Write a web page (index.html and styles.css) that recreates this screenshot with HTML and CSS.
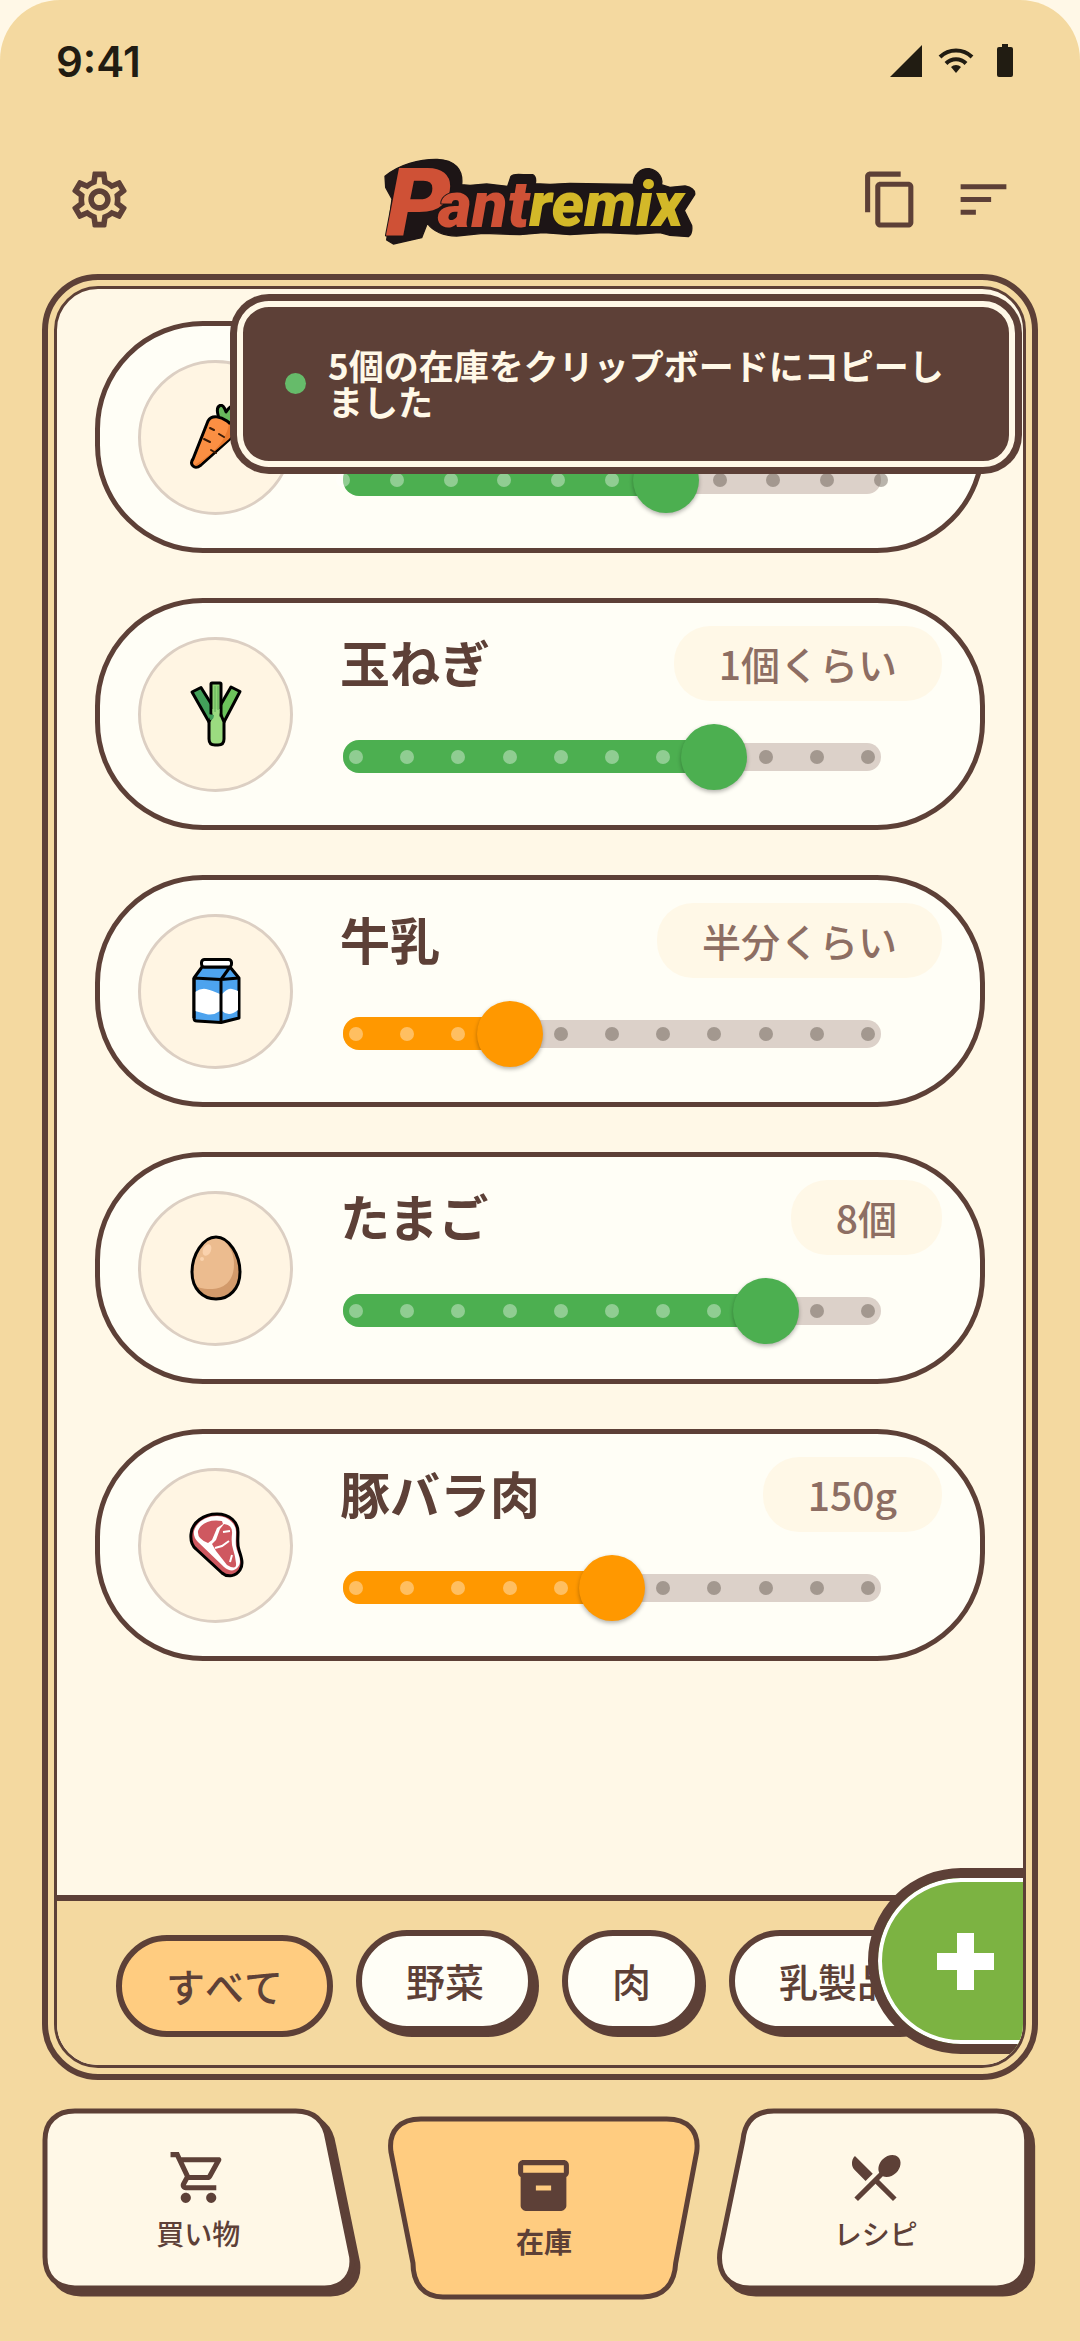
FILE: index.html
```
<!DOCTYPE html>

<html lang="ja">
<head>
<meta charset="utf-8"/>
<meta content="width=device-width, initial-scale=1.0" name="viewport"/>
<title>Pantremix - 在庫</title>
<link rel="stylesheet" href="styles.css">
</head>
<body>
<div class="app">
<!-- Barra de estado -->
<div class="status-bar">
<span class="hora">9:41</span>
<svg class="status-icons" viewBox="0 0 124 34" aria-hidden="true">
<path d="M0 33 32 1v32z"/>
<path d="M66 29l-5-6a7 7 0 0 1 10 0z"/>
<path class="wave" d="M50 13a23 23 0 0 1 32 0M56 19.5a14 14 0 0 1 20 0"/>
<path d="M112 0h6v3h3q2 0 2 2v26q0 2-2 2h-12q-2 0-2-2V5q0-2 2-2h3z"/>
</svg>
</div>

<!-- Cabecera -->
<header class="header">
<button class="icon-btn ajustes" type="button" aria-label="設定">
<svg viewBox="0 0 24 24"><path d="M19.43 12.98c.04-.32.07-.64.07-.98s-.03-.66-.07-.98l2.11-1.65c.19-.15.24-.42.12-.64l-2-3.46c-.09-.16-.26-.25-.44-.25-.06 0-.12.01-.17.03l-2.49 1c-.52-.4-1.08-.73-1.69-.98l-.38-2.65C14.46 2.18 14.25 2 14 2h-4c-.25 0-.46.18-.49.42l-.38 2.65c-.61.25-1.17.59-1.69.98l-2.49-1c-.06-.02-.12-.03-.18-.03-.17 0-.34.09-.43.25l-2 3.46c-.13.22-.07.49.12.64l2.11 1.65c-.04.32-.07.65-.07.98s.03.66.07.98l-2.11 1.65c-.19.15-.24.42-.12.64l2 3.46c.09.16.26.25.44.25.06 0 .12-.01.17-.03l2.49-1c.52.4 1.08.73 1.69.98l.38 2.65c.03.24.24.42.49.42h4c.25 0 .46-.18.49-.42l.38-2.65c.61-.25 1.17-.59 1.69-.98l2.49 1c.06.02.12.03.18.03.17 0 .34-.09.43-.25l2-3.46c.12-.22.07-.49-.12-.64l-2.11-1.65zm-1.98-1.71c.04.31.05.52.05.73 0 .21-.02.43-.05.73l-.14 1.13.89.7 1.08.84-.7 1.21-1.27-.51-1.04-.42-.9.68c-.43.32-.84.56-1.25.73l-1.06.43-.16 1.13-.2 1.35h-1.4l-.19-1.35-.16-1.13-1.06-.43c-.43-.18-.83-.41-1.23-.71l-.91-.7-1.06.43-1.27.51-.7-1.21 1.08-.84.89-.7-.14-1.13c-.03-.31-.05-.54-.05-.74s.02-.43.05-.73l.14-1.13-.89-.7-1.08-.84.7-1.21 1.27.51 1.04.42.9-.68c.43-.32.84-.56 1.25-.73l1.06-.43.16-1.13.2-1.35h1.39l.19 1.35.16 1.13 1.06.43c.43.18.83.41 1.23.71l.91.7 1.06-.43 1.27-.51.7 1.21-1.07.85-.89.7.14 1.13zM12 8c-2.21 0-4 1.79-4 4s1.79 4 4 4 4-1.79 4-4-1.79-4-4-4zm0 6c-1.1 0-2-.9-2-2s.9-2 2-2 2 .9 2 2-.9 2-2 2z"/></svg>
</button>
<svg class="logo" viewBox="0 0 1020 330" role="img" aria-label="Pantremix">
<path class="logo-base" d="M45 97C85 62 150 45 202 46C254 48 280 76 275 122L300 124L350 120L413 127L423 97Q430 89 460 92L488 92Q500 98 496 119L540 121L600 118L700 120L790 121C790 92 812 72 838 74C868 80 880 105 874 122L900 130L945 126Q977 133 974 152L943 200L965 245Q968 270 955 278L900 274L870 266L800 270L700 266L600 272L520 266L450 272L340 268L260 276Q200 275 172 238L155 281L70 300L50 288L66 165L47 130Z"/>
<text class="logo-p" x="42" y="272">P</text>
<text class="logo-ant" x="204" y="248">ant</text>
<text class="logo-remix" x="478" y="246">remix</text>
</svg>
<div class="acciones">
<button class="icon-btn" type="button" aria-label="コピー">
<svg viewBox="0 0 24 24"><path d="M16 1H4c-1.1 0-2 .9-2 2v14h2V3h12V1zm3 4H8c-1.1 0-2 .9-2 2v14c0 1.1.9 2 2 2h11c1.1 0 2-.9 2-2V7c0-1.1-.9-2-2-2zm0 16H8V7h11v14z"/></svg>
</button>
<button class="icon-btn" type="button" aria-label="並べ替え">
<svg viewBox="0 0 24 24"><path d="M3 18h6v-2H3v2zM3 6v2h18V6H3zm0 7h12v-2H3v2z"/></svg>
</button>
</div>
</header>

<!-- Despensa -->
<main class="marco">
<div class="panel">
<ul class="lista">
<li class="card">
<div class="foto">
<svg viewBox="0 0 64 66">
<path class="trazo" fill="#69b95c" d="M36 17C33 9 32 3 36 1.500S42 8 42 8s5-8 8-6 0 8 0 8 8-3 8 1-10 10-10 10z"/>
<path class="trazo" fill="#fb8f43" d="M24 17C28 10 37 13 43 17S51 29 47 34L17 61Q12 65 9 62T9 55Z"/>
<path fill="#e97a2f" d="M45 20c6 6 3 12 0 15L17 59q-4 4-6 2c14-9 30-20 34-41z"/>
<path class="raya" d="M26 24l4 2M35 30l5 3M20 35l6 3M27 46l5 3"/>
</svg>
</div>
<div class="info">
<div class="titulo"></div>
<div class="slider borde" style="--nivel: 6">
<span class="pista"></span>
<span class="relleno"></span>
<span class="puntos"><i class="on"></i><i class="on"></i><i class="on"></i><i class="on"></i><i class="on"></i><i class="on"></i><i></i><i></i><i></i><i></i><i></i></span>
<input id="nivel-1" type="range" min="0" max="10" value="6" aria-label="にんじん"/>
</div>
</div>
</li>

<li class="card">
<div class="foto">
<svg viewBox="0 0 64 66">
<path class="trazo" fill="#43a05a" d="M8 11 17 6.500 36 37 25 41Z"/>
<path class="trazo" fill="#6cc35b" d="M47 6 56 10.500 40 41 29 37Z"/>
<path class="trazo" fill="#8fd474" d="M27 3q0-1 1-1h8q1 0 1 1v34h-10z"/>
<path class="trazo" fill="#9bdb80" d="M25 41 28 34h9L40 41V58q0 6-6 6h-3q-6 0-6-6z"/>
<path fill="#9bdb80" d="M28.500 28h7v12h-7z"/>
<path stroke="#5cae58" fill="none" d="M31 5v26M34 5v24"/>
<path fill="#43a05a" d="M24 33l6 1q0 5-4 5z"/>
</svg>
</div>
<div class="info">
<div class="titulo">
<label for="nivel-2">玉ねぎ</label>
<span class="cantidad">1個くらい</span>
</div>
<div class="slider" style="--nivel: 7">
<span class="pista"></span>
<span class="relleno"></span>
<span class="puntos"><i class="on"></i><i class="on"></i><i class="on"></i><i class="on"></i><i class="on"></i><i class="on"></i><i class="on"></i><i></i><i></i><i></i><i></i></span>
<input id="nivel-2" type="range" min="0" max="10" value="7"/>
</div>
</div>
</li>

<li class="card">
<div class="foto">
<svg viewBox="0 0 64 66">
<path class="trazo" fill="#4da3ee" d="M10 20 18 9H46L55 20V60L37 64.500 13 63Q10 63 10 60Z"/>
<path fill="#fff" d="M11 34q6-4 11-3t14 5v17q-7 5-14 3t-11-3zM38 36q6-6 10-5t6 2v19q-5 4-9 4t-7-3z"/>
<path class="trazo" fill="none" d="M10 20 37 21.500 55 20M37 21.500V64.500M37 21.500 46 9M10 20V60"/>
<rect class="trazo" fill="#fff" x="17.500" y="1.500" width="30" height="7.500" rx="3"/>
</svg>
</div>
<div class="info">
<div class="titulo">
<label for="nivel-3">牛乳</label>
<span class="cantidad">半分くらい</span>
</div>
<div class="slider medio" style="--nivel: 3">
<span class="pista"></span>
<span class="relleno"></span>
<span class="puntos"><i class="on"></i><i class="on"></i><i class="on"></i><i></i><i></i><i></i><i></i><i></i><i></i><i></i><i></i></span>
<input id="nivel-3" type="range" min="0" max="10" value="3"/>
</div>
</div>
</li>

<li class="card">
<div class="foto">
<svg viewBox="0 0 64 66">
<path fill="#d29a6b" d="M32 2C45 2 56 20 56 37S45 64 32 64 8 54 8 37 19 2 32 2Z"/>
<path fill="#ecbc8f" d="M32 2C43 4 50 17 50 29 50 48 38 54 27 54 18 54 12 53 9 47 4 25 19 2 32 2Z"/>
<ellipse fill="#fad2ad" cx="23" cy="15" rx="4" ry="6" transform="rotate(25 23 15)"/>
<circle fill="#fad2ad" cx="18" cy="24" r="2"/>
<path class="trazo" fill="none" d="M32 2C45 2 56 20 56 37S45 64 32 64 8 54 8 37 19 2 32 2Z"/>
</svg>
</div>
<div class="info">
<div class="titulo">
<label for="nivel-4">たまご</label>
<span class="cantidad">8個</span>
</div>
<div class="slider" style="--nivel: 8">
<span class="pista"></span>
<span class="relleno"></span>
<span class="puntos"><i class="on"></i><i class="on"></i><i class="on"></i><i class="on"></i><i class="on"></i><i class="on"></i><i class="on"></i><i class="on"></i><i></i><i></i><i></i></span>
<input id="nivel-4" type="range" min="0" max="10" value="8"/>
</div>
</div>
</li>

<li class="card">
<div class="foto">
<svg viewBox="0 0 64 66">
<path class="trazo" fill="#cf5860" d="M7 22C8 10 20 2 33 2S54 10 54 20 53 32 55 38 60 52 56 58 44 66 38 61L12 37Q6 32 7 22Z"/>
<path fill="#fff" d="M10 19C13 9 23 4 33 4S52 11 52 20 51 32 53 38 58 50 54 55 45 59 40 55L14 30Q9 25 10 19Z"/>
<path fill="#cf5860" d="M14 19C17 11 26 7 38 9L39 12 33 16 28 28 24 31Q13 27 14 19ZM40 12Q49 13 48 22T49 37 52 51 43 53L32 39 28 32 32 28 36 17Z"/>
<path stroke="#fff" stroke-width="2" fill="none" d="M39 20l7-1M31 36l7-2 7-5M46 50l2-7"/>
</svg>
</div>
<div class="info">
<div class="titulo">
<label for="nivel-5">豚バラ肉</label>
<span class="cantidad">150g</span>
</div>
<div class="slider medio" style="--nivel: 5">
<span class="pista"></span>
<span class="relleno"></span>
<span class="puntos"><i class="on"></i><i class="on"></i><i class="on"></i><i class="on"></i><i class="on"></i><i></i><i></i><i></i><i></i><i></i><i></i></span>
<input id="nivel-5" type="range" min="0" max="10" value="5"/>
</div>
</div>
</li>
</ul>

<div class="filtros">
<button class="chip activo" type="button">すべて</button>
<button class="chip" type="button">野菜</button>
<button class="chip" type="button">肉</button>
<button class="chip" type="button">乳製品</button>
</div>

<button class="fab" type="button" aria-label="追加">
<svg viewBox="0 0 57 57"><path d="M20 0h17v20h20v17H37v20H20V37H0V20h20z"/></svg>
</button>

<div class="toast" role="status">
<span class="toast-punto"></span>
<p>5個の在庫をクリップボードにコピーしました</p>
</div>
</div>
</main>

<!-- Navegación -->
<nav class="nav">
<a class="nav-item compras" href="#kaimono">
<svg class="forma" viewBox="0 0 321 192">
<path class="sombra" d="M39 9H260C278 9 289 18 292 38L316 155C318 172 308 186 289 186H39C20 186 9 174 9 155V38C9 20 20 9 39 9Z"/>
<path d="M33 3H254C272 3 283 12 286 32L310 149C312 166 302 180 283 180H33C14 180 3 168 3 149V32C3 14 14 3 33 3Z"/>
</svg>
<svg class="nav-icon" viewBox="0 0 24 24"><path d="M15.55 13c.75 0 1.41-.41 1.75-1.03l3.58-6.49c.37-.66-.11-1.48-.87-1.48H5.21l-.94-2H1v2h2l3.6 7.59-1.35 2.44C4.52 15.37 5.48 17 7 17h12v-2H7l1.1-2h7.45zM6.16 6h12.15l-2.76 5H8.53L6.16 6zM7 18c-1.1 0-1.99.9-1.99 2S5.9 22 7 22s2-.9 2-2-.9-2-2-2zm10 0c-1.1 0-1.99.9-1.99 2s.89 2 1.99 2 2-.9 2-2-.9-2-2-2z"/></svg>
<span>買い物</span>
</a>
<a class="nav-item actual" href="#zaiko" aria-current="page">
<svg class="forma" viewBox="0 0 321 192">
<path d="M42 11H288C308 11 321 22 318 44L297 155C296 176 285 189 264 189H64C45 189 34 176 34 155L12 44C9 22 22 11 42 11Z"/>
</svg>
<svg class="nav-icon" viewBox="0 0 24 24"><path d="M20 2H4c-1 0-2 .9-2 2v3.01c0 .72.43 1.34 1 1.69V20c0 1.1 1.1 2 2 2h14c.9 0 2-.9 2-2V8.7c.57-.35 1-.97 1-1.69V4c0-1.1-1-2-2-2zm-5 12H9v-2h6v2zm5-7H4V4h16v3z"/></svg>
<span>在庫</span>
</a>
<a class="nav-item" href="#recipe">
<svg class="forma" viewBox="0 0 321 192">
<path class="sombra" d="M65 9H288C307 9 318 20 318 38V155C318 174 307 186 288 186H41C20 186 8 172 11 149L34 38C36 18 47 9 65 9Z"/>
<path d="M59 3H282C301 3 312 14 312 32V149C312 168 301 180 282 180H35C14 180 2 166 5 143L28 32C30 12 41 3 59 3Z"/>
</svg>
<svg class="nav-icon" viewBox="0 0 24 24"><path d="M8.1 13.34l2.83-2.83L3.91 3.5c-1.56 1.56-1.56 4.09 0 5.66l4.19 4.18zm6.78-1.81c1.53.71 3.68.21 5.27-1.38 1.91-1.91 2.28-4.65.81-6.12-1.46-1.46-4.2-1.1-6.12.81-1.59 1.59-2.09 3.74-1.38 5.27L3.7 19.87l1.41 1.41L12 14.41l6.88 6.88 1.41-1.41L13.41 13l1.47-1.47z"/></svg>
<span>レシピ</span>
</a>
</nav>
</div>
</body>
</html>
```

FILE: styles.css
```
:root {
  --color-marron: #5d4037;
  --color-arena: #f4d9a0;
  --color-crema: #fff8e7;
  --color-tarjeta: #fffef6;
  --color-activo: #ffcc80;
  --color-verde: #4caf50;
  --color-naranja: #ff9800;
}

* {
  box-sizing: border-box;
}

body {
  margin: 0;
  background-color: var(--color-crema);
  color: var(--color-marron);
  font-family: 'Noto Sans CJK JP', sans-serif;
}

button {
  font-family: inherit;
  color: inherit;
  cursor: pointer;
}

.app {
  display: flex;
  flex-direction: column;
  min-height: 100vh;
  background-color: var(--color-arena);
  border-radius: 60px 60px 0 0;
}

/* Barra de estado */
.status-bar {
  display: flex;
  align-items: center;
  justify-content: space-between;
  height: 122px;
  padding: 0 66px 0 56px;
  color: #211c12;
}

.hora {
  font-family: Inter, sans-serif;
  font-size: 42px;
  font-weight: 600;
}

.status-icons {
  width: 124px;
  height: 34px;
  fill: #211c12;
}

.status-icons .wave {
  fill: none;
  stroke: #211c12;
  stroke-width: 4;
}

/* Cabecera */
.header {
  display: grid;
  grid-template-columns: 1fr auto 1fr;
  align-items: center;
  height: 152px;
  padding: 2px 66px 0;
}

.icon-btn {
  width: 61px;
  height: 61px;
  padding: 0;
  border: none;
  background: none;
}

.icon-btn svg {
  display: block;
  width: 100%;
  fill: var(--color-marron);
}

.icon-btn.ajustes {
  width: 67px;
  height: 67px;
}

.logo {
  width: 340px;
  height: 110px;
  overflow: visible;
}

.logo-base {
  fill: #1d1516;
  stroke: #1d1516;
  stroke-width: 4;
  stroke-linejoin: round;
}

.logo text {
  font-family: Roboto, sans-serif;
  font-weight: 900;
  font-style: italic;
  stroke: #1d1516;
  stroke-width: 6;
  stroke-linejoin: round;
  paint-order: stroke;
}

.logo .logo-p {
  font-family: 'DejaVu Sans', sans-serif;
  font-weight: 700;
  font-size: 276px;
  fill: #cf5136;
}

.logo-ant {
  font-size: 196px;
  fill: #cf5136;
}

.logo-remix {
  font-size: 186px;
  fill: #d3b828;
}

.acciones {
  display: flex;
  justify-content: flex-end;
  gap: 32px;
}

/* Marco doble */
.marco {
  flex: 1;
  display: flex;
  margin: 0 42px;
  padding: 6px;
  border: 6px solid var(--color-marron);
  border-radius: 56px;
}

.panel {
  position: relative;
  flex: 1;
  display: flex;
  flex-direction: column;
  min-width: 0;
  overflow: hidden;
  border: 3px solid var(--color-marron);
  border-radius: 44px;
  background-color: var(--color-crema);
}

.lista {
  flex: 1;
  display: flex;
  flex-direction: column;
  gap: 45px;
  margin: 0;
  padding: 32px 38px;
  list-style: none;
}

.card {
  display: flex;
  align-items: center;
  gap: 47px;
  padding: 0 38px;
  border: 5px solid var(--color-marron);
  border-radius: 108px;
  background-color: var(--color-tarjeta);
}

.foto {
  display: grid;
  place-items: center;
  width: 155px;
  height: 155px;
  border: 3px solid #dccfc3;
  border-radius: 50%;
  background-color: #fff5e3;
}

.foto svg {
  width: 64px;
  height: 66px;
}

.trazo {
  stroke: #000;
  stroke-width: 3;
  stroke-linejoin: round;
}

.raya {
  fill: none;
  stroke: #3a1c08;
  stroke-width: 2;
  stroke-linecap: round;
}

.info {
  flex: 1;
  display: flex;
  flex-direction: column;
  gap: 22px;
  padding: 23px 0 35px;
}

.titulo {
  display: flex;
  align-items: flex-start;
  justify-content: space-between;
  min-height: 75px;
}

.titulo label {
  font-size: 50px;
  font-weight: 700;
  line-height: 71px;
}

.cantidad {
  padding: 0 45px;
  border-radius: 36px;
  background-color: var(--color-crema);
  color: #8d6e63;
  font-size: 39px;
  font-weight: 500;
  line-height: 75px;
}

/* Slider: pista, relleno, puntos e input apilados */
.slider {
  --margen: 13px;
  --color-nivel: var(--color-verde);
  display: grid;
  align-items: center;
  margin: 0 61px 0 3px;
}

.slider > * {
  grid-area: 1 / 1;
}

.slider.medio {
  --color-nivel: var(--color-naranja);
}

.slider.borde {
  --margen: 0px;
}

.pista {
  height: 28px;
  border-radius: 14px;
  background-color: #dcd1c9;
}

.relleno {
  width: calc(var(--margen) + (100% - 2 * var(--margen)) * var(--nivel) / 10);
  height: 33px;
  border-radius: 16px 0 0 16px;
  background-color: var(--color-nivel);
}

.puntos {
  display: flex;
  justify-content: space-between;
  margin: 0 calc(var(--margen) - 7px);
}

.puntos i {
  width: 14px;
  height: 14px;
  border-radius: 50%;
  background-color: rgba(70, 60, 50, 0.38);
}

.puntos .on {
  background-color: rgba(255, 255, 255, 0.38);
}

.slider input {
  -webkit-appearance: none;
  appearance: none;
  height: 67px;
  margin: 0 calc(var(--margen) - 33px);
  background: none;
}

.slider input::-webkit-slider-thumb {
  -webkit-appearance: none;
  width: 66px;
  height: 66px;
  border-radius: 50%;
  background-color: var(--color-nivel);
  box-shadow: 0 2px 4px rgba(0, 0, 0, 0.3);
}

/* Filtros */
.filtros {
  display: flex;
  gap: 28px;
  padding: 29px 54px 33px;
  border-top: 6px solid var(--color-marron);
  background-color: var(--color-arena);
  overflow: hidden;
}

.chip {
  flex: none;
  height: 102px;
  padding: 0 44px 2px;
  border: 6px solid var(--color-marron);
  border-radius: 51px;
  background-color: var(--color-tarjeta);
  box-shadow: 5px 5px 0 var(--color-marron);
  font-size: 39px;
  font-weight: 500;
  font-kerning: none;
}

.chip.activo {
  background-color: var(--color-activo);
  box-shadow: none;
  transform: translate(5px, 5px);
}

.fab {
  position: absolute;
  right: -105px;
  bottom: 11px;
  display: grid;
  place-items: center;
  width: 260px;
  height: 186px;
  padding: 0 66px 0 0;
  border: 10px solid var(--color-marron);
  border-radius: 93px;
  background-color: #7cb342;
  box-shadow: inset 0 0 0 4px #fff;
}

.fab svg {
  width: 57px;
  height: 57px;
  fill: #fff;
}

/* Aviso */
.toast {
  position: absolute;
  top: 12px;
  left: 180px;
  right: 8px;
  display: flex;
  align-items: center;
  gap: 22px;
  padding: 40px 41px 42px 42px;
  border: 6px solid var(--color-crema);
  border-radius: 32px;
  background-color: var(--color-marron);
  box-shadow: 0 0 0 7px var(--color-marron);
  color: var(--color-crema);
}

.toast p {
  margin: 0;
  font-size: 35px;
  font-weight: 700;
  line-height: 36px;
}

.toast-punto {
  flex: none;
  width: 21px;
  height: 21px;
  border-radius: 50%;
  background-color: #66bb6a;
}

/* Navegación */
.nav {
  display: grid;
  grid-template-columns: repeat(3, 1fr);
  gap: 16px;
  padding: 28px 44px 41px 42px;
}

.nav-item {
  position: relative;
  display: flex;
  flex-direction: column;
  align-items: center;
  gap: 11px;
  height: 192px;
  padding-top: 39px;
  color: var(--color-marron);
  font-size: 28px;
  font-weight: 500;
  line-height: 28px;
  text-decoration: none;
}

.nav-item.compras {
  padding-right: 8px;
}

.nav-item.actual {
  padding-top: 47px;
  padding-left: 10px;
  font-weight: 700;
}

.forma {
  position: absolute;
  top: 0;
  left: 0;
  width: 100%;
  height: 100%;
  overflow: visible;
  fill: var(--color-crema);
  stroke: var(--color-marron);
  stroke-width: 5;
}

.forma .sombra {
  fill: var(--color-marron);
}

.actual .forma {
  fill: var(--color-activo);
}

.nav-icon {
  position: relative;
  width: 61px;
  height: 61px;
  fill: var(--color-marron);
}

.nav-item span {
  position: relative;
}
```
